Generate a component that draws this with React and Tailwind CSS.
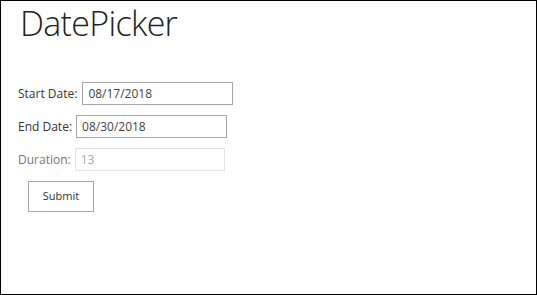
import { useState } from "react";

export default function App() {
    const [start, setStart] = useState("08/17/2018");
    const [end, setEnd] = useState("08/30/2018");

    const rows = [
        { label: "Start Date:", value: start, onChange: setStart },
        { label: "End Date:", value: end, onChange: setEnd },
    ];

    return (
        <div
            className="w-[537px] h-[295px] border border-black bg-white text-[#333]"
            style={{ fontFamily: '"Open Sans", "Segoe UI", sans-serif' }}
        >
            <h1 className="pl-[19px] text-[34px] font-light leading-[44px] tracking-[-0.7px] text-[#222]">
                DatePicker
            </h1>

            <div className="pl-[17px] pt-[37px] flex flex-col gap-[10px]">
                {rows.map((r, i) => (
                    <div key={r.label} className={`flex items-center ${i === 0 ? "gap-[5px]" : "gap-[4px]"}`}>
                        <label className="text-[12px]">{r.label}</label>
                        <input
                            value={r.value}
                            onChange={(e) => r.onChange(e.target.value)}
                            className="w-[151px] h-[23px] border border-[#a6a6a6] px-[5px] text-[12px] text-[#444] outline-none"
                        />
                    </div>
                ))}
                <div className="flex items-center gap-[4px]">
                    <label className="text-[12px] text-[#777]">Duration:</label>
                    <input
                        disabled
                        value="13"
                        className="w-[150px] h-[23px] border border-[#e3e3e3] bg-white px-[5px] text-[12px] text-[#aaa]"
                    />
                </div>
            </div>

            <div className="pl-[27px] pt-[10px]">
                <button
                    type="button"
                    className="w-[66px] h-[31px] border border-[#a6a6a6] bg-white text-[11px] text-[#333]"
                >
                    Submit
                </button>
            </div>
        </div>
    );
}
